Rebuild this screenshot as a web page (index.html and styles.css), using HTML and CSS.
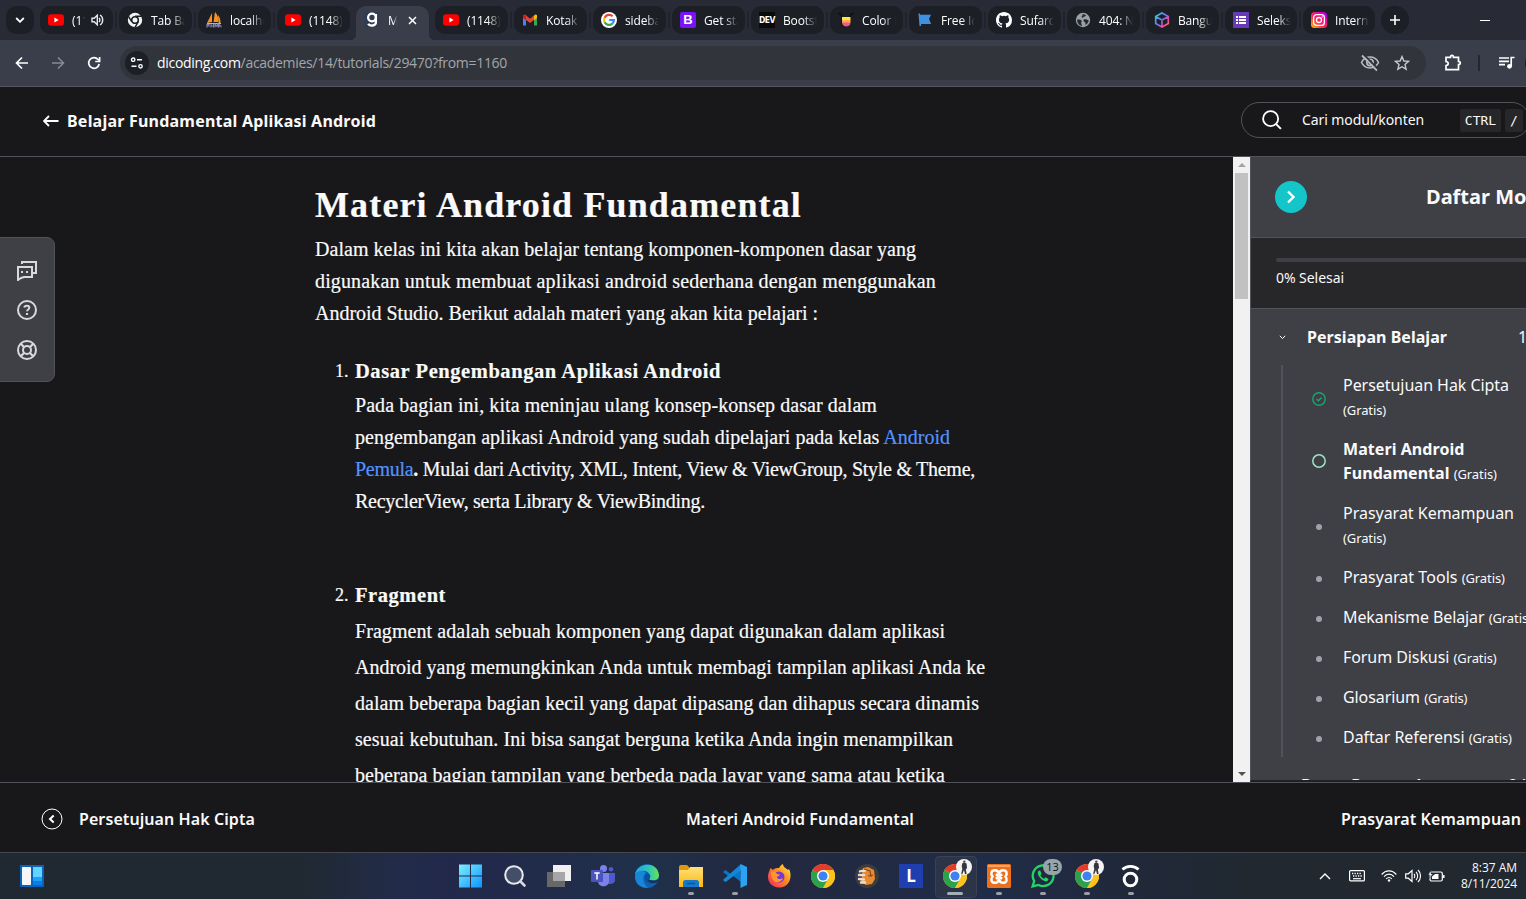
FILE: index.html
```html
<!DOCTYPE html>
<html lang="id">
<head>
<meta charset="utf-8">
<title>Materi Android Fundamental</title>
<link rel="stylesheet" href="styles.css">
</head>
<body>
<svg width="0" height="0" class="defs">
  <defs>
    <linearGradient id="win" x1="0" y1="0" x2="1" y2="1"><stop offset="0" stop-color="#7df0ff"/><stop offset="1" stop-color="#0a94ff"/></linearGradient>
    <linearGradient id="insta" x1="0" y1="1" x2="1" y2="0"><stop offset="0" stop-color="#ffc800"/><stop offset=".4" stop-color="#ff2a50"/><stop offset=".75" stop-color="#e800a8"/><stop offset="1" stop-color="#8a00ff"/></linearGradient>
    <linearGradient id="cube" x1="0" y1="0" x2="1" y2="1"><stop offset="0" stop-color="#22d3d8"/><stop offset=".5" stop-color="#7a6cf0"/><stop offset=".75" stop-color="#f0459a"/><stop offset="1" stop-color="#ff8a30"/></linearGradient>
    <linearGradient id="edge" x1="0" y1="0" x2="1" y2="0"><stop offset="0" stop-color="#1ba6e8"/><stop offset=".6" stop-color="#2fc9b4"/><stop offset="1" stop-color="#6be04c"/></linearGradient>
    <linearGradient id="fire" x1="1" y1="0" x2="0" y2="1"><stop offset="0" stop-color="#fff04a"/><stop offset=".45" stop-color="#ff8a1e"/><stop offset="1" stop-color="#f0206a"/></linearGradient>
    <linearGradient id="folder" x1="0" y1="0" x2="0" y2="1"><stop offset="0" stop-color="#ffe07a"/><stop offset="1" stop-color="#fcb813"/></linearGradient>
    <symbol id="yt" viewBox="0 0 16 16"><rect y="2.3" width="16" height="11.4" rx="3" fill="#f00"/><path d="M6.4 5.6v4.8L10.6 8z" fill="#fff"/></symbol>
    <symbol id="chrome" viewBox="0 0 24 24"><circle cx="12" cy="12" r="12" fill="#fcc31e"/><path d="M12 12L1.6 6A12 12 0 0 1 22.4 6z" fill="#e33b2e"/><path d="M12 12L1.6 6A12 12 0 0 0 12 24l5.2-9z" fill="#2da14c"/><path d="M12 6h10.4A12 12 0 0 1 12 24l5.2-9z" fill="#fcc31e"/><circle cx="12" cy="12" r="6" fill="#fff"/><circle cx="12" cy="12" r="4.6" fill="#3c82f0"/></symbol>
    <symbol id="person" viewBox="0 0 16 16"><circle cx="8" cy="8" r="8" fill="#f4f4f4"/><path d="M6.500 4l2-.5 2 1 .6 5-1.300.3.8 5.200H9L8 11l-1.800 4.200-1-.5L6.300 10l-.6-3z" fill="#35363d"/><circle cx="8.300" cy="2.600" r="1.200" fill="#5d4540"/></symbol>
  </defs>
</svg>

<div class="screen">
  <div class="tabs">
    <div class="tab-btn"><svg width="10" height="6" viewBox="0 0 10 6" class="line"><path d="M1.2 1l3.8 3.8L8.8 1" stroke-width="1.8"/></svg></div>
    <div class="tab"><svg class="fav"><use href="#yt"/></svg><span class="label short">(11</span><svg class="speaker" width="13" height="12" viewBox="0 0 13 12"><path d="M1 4.2h2.2L6.3 1.2v9.6L3.2 7.8H1z" fill="none" stroke="#e6e8eb" stroke-width="1.4"/><path d="M8 4c1.2 1 1.2 3 0 4M9 1c3.6 2 3.6 8 0 10" fill="none" stroke="#e6e8eb" stroke-width="1.4"/></svg></div>
    <div class="tab"><svg class="fav" viewBox="0 0 16 16"><circle cx="8" cy="8" r="7.2" fill="#f3f4f5"/><circle cx="8" cy="8" r="3.3" fill="#f3f4f5" stroke="#1c1f25" stroke-width="1.6"/><path d="M8 4.2h6.6M4.8 9.8L1.5 4.3M11.2 9.8L8 15.4" stroke="#1c1f25" stroke-width="1.4"/></svg><span class="label">Tab Bar</span></div>
    <div class="tab"><svg class="fav" viewBox="0 0 16 16"><path d="M6 1v9L1 11zM9 0c3 3 3.5 6 3 10H7.500zM12 3c2 2 2.500 5 2.500 8h-2z" fill="#f79220"/><path d="M1 11.500h14" stroke="#e8b070"/><path d="M1 15.500v-3h2v1.500H1M5 12v3.500M5 14h2M7.500 12v3.500M9 15.500V12l1.500 2 1.500-2v3.500M13 15.500v-3l2 1.500v1.500" fill="none" stroke="#8888b8" stroke-width="1.1"/></svg><span class="label">localhost</span></div>
    <div class="tab"><svg class="fav"><use href="#yt"/></svg><span class="label">(1148) Y</span></div>
    <div class="tab active"><span class="fav fav-g"><svg width="16" height="16" viewBox="0 0 16 16" fill="none" stroke="#fff" stroke-width="2.300"><circle cx="8" cy="5.500" r="3.900"/><path d="M11.900 2v8.200c0 4-6.500 4.300-7.700 1.600"/></svg></span><span class="label one">Ma</span><svg class="close" width="9" height="9" viewBox="0 0 9 9"><path d="M1 1l7 7M8 1L1 8" stroke="#fff" stroke-width="1.5"/></svg></div>
    <div class="tab nosep"><svg class="fav"><use href="#yt"/></svg><span class="label">(1148) Y</span></div>
    <div class="tab"><svg class="fav" viewBox="0 0 16 16"><path d="M1 3v10.500h3V7.500L1 4z" fill="#4285f4"/><path d="M15 3v10.500h-3V7.500z" fill="#34a853"/><path d="M1 3.500l2-1L8 6.700l5-4.200 2 1v2L8 11 1 5.500z" fill="#ea4335"/><path d="M12 4l1.500-1.500L15 3v3l-3 2.500z" fill="#fbbc04"/><path d="M1 3.500l1-.8 2 1.500v4L1 6z" fill="#c5221f"/></svg><span class="label">Kotak M</span></div>
    <div class="tab"><svg class="fav" viewBox="0 0 16 16"><circle cx="8" cy="8" r="8" fill="#fff"/><g fill="none" stroke-width="2.200"><path d="M11.600 4.300A5 5 0 0 0 3.600 5.700" stroke="#ea4335"/><path d="M3.600 5.700a5 5 0 0 0 0 4.600" stroke="#fbbc05"/><path d="M3.600 10.300a5 5 0 0 0 7.700 1.400" stroke="#34a853"/><path d="M11.300 11.700A5 5 0 0 0 13 8H8.200" stroke="#4285f4"/></g></svg><span class="label">sidebar</span></div>
    <div class="tab"><span class="fav fav-b">B</span><span class="label">Get start</span></div>
    <div class="tab"><span class="fav fav-dev">DEV</span><span class="label">Bootstr</span></div>
    <div class="tab"><svg class="fav" viewBox="0 0 16 16"><path d="M0 2c2-1 4 0 4 3M16 2c-2-1-4 0-4 3" stroke="#111" stroke-width="1.600" fill="none"/><path d="M3 5h10v6a4 4 0 0 1-4 4H7a4 4 0 0 1-4-4z" fill="#141010"/><path d="M4 5h8.500v3H4z" fill="#ffe83a"/><path d="M4 8h8.500v3H4z" fill="#ffae4d"/><path d="M4 10.500h8.500c0 3-2 4-4.200 4S4 13 4 10.500z" fill="#f0588c"/></svg><span class="label">Color H</span></div>
    <div class="tab"><svg class="fav" viewBox="0 0 16 16"><path d="M1.500 1.500h1.600v1.200h11L12 7l2.200 5H4v2H2.500z" fill="#4090e2"/></svg><span class="label">Free Icon</span></div>
    <div class="tab"><svg class="fav" viewBox="0 0 16 16"><path fill="#fff" d="M8 0C3.580 0 0 3.580 0 8c0 3.540 2.290 6.530 5.470 7.590.4.070.55-.17.55-.38 0-.19-.01-.82-.01-1.490-2.010.37-2.530-.49-2.690-.94-.09-.23-.48-.94-.82-1.130-.28-.15-.68-.52-.01-.53.63-.01 1.080.58 1.230.82.72 1.210 1.870.87 2.330.66.070-.52.28-.87.51-1.070-1.780-.2-3.640-.89-3.640-3.950 0-.87.31-1.590.82-2.150-.08-.2-.36-1.020.08-2.120 0 0 .67-.21 2.200.82a7.400 7.400 0 0 1 4 0c1.530-1.040 2.200-.82 2.200-.82.44 1.100.16 1.920.08 2.120.51.56.82 1.270.82 2.150 0 3.070-1.870 3.750-3.650 3.950.29.25.54.73.54 1.480 0 1.070-.01 1.930-.01 2.200 0 .21.15.46.55.38A8 8 0 0 0 16 8c0-4.420-3.580-8-8-8z"/></svg><span class="label">Sufardi</span></div>
    <div class="tab"><svg class="fav" viewBox="0 0 16 16"><circle cx="8" cy="8" r="7.200" fill="#9aa0a6"/><path d="M2.200 7.500c2.500 0 4 .5 4.500 1.300.5.800-1 1.200-.5 2.500l1 2.700c-3-.3-5.300-3.300-5-6.500zM7.500 2.200c1.500-.2 3 .5 3.700 1.300-1 .3-1.500 1.500-2.700 1.500-.5 1-1.800.8-2 .2 0-1 1.700-1.500 1-3zM8.700 7.600c1.500-.6 3.800 0 5.100 1.200-.6 2-1.800 3.300-3.300 4.200-.2-1.500.3-2.500-.8-3-1 0-1.500-1.500-1-2.400z" fill="#24272e"/></svg><span class="label">404: No</span></div>
    <div class="tab"><svg class="fav" viewBox="0 0 16 16"><path d="M8 .9l6.300 3.500v7L8 15.100l-6.300-3.700v-7zM2 4.700L8 8l6-3.300M8 8v7" fill="none" stroke="url(#cube)" stroke-width="1.700"/></svg><span class="label">Bangun</span></div>
    <div class="tab narrow"><svg class="fav" viewBox="0 0 16 16"><rect width="16" height="16" fill="#673ab7"/><path d="M3 4h2v2H3zM3 7h2v2H3zM3 10h2v2H3zM6 4h7v2H6zM6 7h7v2H6zM6 10h7v2H6z" fill="#fff"/></svg><span class="label">Seleksi</span></div>
    <div class="tab narrow"><svg class="fav" viewBox="0 0 16 16"><rect width="16" height="16" rx="3.500" fill="url(#insta)"/><rect x="2.600" y="2.600" width="10.800" height="10.800" rx="3" fill="none" stroke="#fff" stroke-width="1.300"/><circle cx="8" cy="8" r="2.500" fill="none" stroke="#fff" stroke-width="1.300"/><circle cx="11.200" cy="4.900" r=".7" fill="#fff"/></svg><span class="label">Interns</span></div>
    <div class="tab-btn"><svg width="10" height="10" viewBox="0 0 10 10"><path d="M5 0v10M0 5h10" stroke="#fff" stroke-width="1.600"/></svg></div>
    <div class="minimize"></div>
  </div>

  <div class="toolbar">
    <div class="nav">
      <svg width="14" height="14" viewBox="0 0 14 14" class="line"><path d="M13 7H2M7 1.500L1.500 7 7 12.500" stroke-width="1.700"/></svg>
      <svg width="14" height="14" viewBox="0 0 14 14" class="line dim"><path d="M1 7h11M7 1.500L12.500 7 7 12.500" stroke-width="1.500"/></svg>
      <svg width="14" height="14" viewBox="0 0 14 14" class="line"><path d="M12.200 8A5.300 5.300 0 1 1 11 3.500l1 1" stroke-width="1.700"/><path d="M12.600 1v4.500H8.200" stroke-width="1.700"/></svg>
    </div>
    <div class="omnibox">
      <span class="siteinfo"><svg width="14" height="12" viewBox="0 0 14 12" class="line"><circle cx="3.200" cy="2.700" r="1.700" stroke-width="1.400"/><path d="M7 2.700h5M1.500 9.300h5" stroke-width="1.500"/><circle cx="10.500" cy="9.300" r="1.700" stroke-width="1.400"/></svg></span>
      <span class="url" data-fit="350"><b>dicoding.com</b>/academies/14/tutorials/29470?from=1160</span>
      <svg class="eye" width="20" height="18" viewBox="0 0 20 18"><path d="M1.500 8.500C3.500 4.500 6.600 3 10 3s6.500 1.500 8.500 5.500C16.500 12.500 13.400 14 10 14s-6.500-1.500-8.500-5.500z" fill="none" stroke="#b9bcc0" stroke-width="1.600"/><circle cx="10" cy="8.500" r="3.200" fill="none" stroke="#b9bcc0" stroke-width="1.600"/><path d="M4 .8L19 16" stroke="#31343b" stroke-width="1.800"/><path d="M2 1.500L17 16.700" stroke="#b9bcc0" stroke-width="1.800"/></svg>
      <svg class="star" width="16" height="16" viewBox="0 0 16 16"><path d="M8 1.600l1.900 4.400 4.700.4-3.600 3.100 1.100 4.700L8 11.700l-4.100 2.500L5 9.500 1.400 6.400 6.100 6z" fill="none" stroke="#c6c8cb" stroke-width="1.400"/></svg>
    </div>
    <svg class="puzzle" width="18" height="18" viewBox="0 0 18 18"><path d="M2 3.300h4.500C6.500.8 9.500.8 9.500 3.300H14.500v4.200c2.400 0 2.400 3 0 3v5.200H2v-4c3-.6 3-3.800 0-4.200z" fill="none" stroke="#fff" stroke-width="1.700"/></svg>
    <span class="tsep"></span>
    <svg class="music" width="16" height="14" viewBox="0 0 16 14"><path d="M0 2h10M0 5.300h10M0 8.600h6M12.200 10V1.500h3.300" stroke="#fff" stroke-width="1.700" fill="none"/><circle cx="10.500" cy="10.300" r="2.400" fill="#fff"/></svg>
    <span class="avatar-edge"></span>
  </div>

  <header class="head">
    <svg width="16" height="12" viewBox="0 0 16 12" class="line"><path d="M15.500 6H1.500M6 1L1 6l5 5" stroke-width="1.800"/></svg>
    <strong class="course" data-fit="309">Belajar Fundamental Aplikasi Android</strong>
    <div class="search">
      <svg width="20" height="20" viewBox="0 0 22 22" class="line"><circle cx="9.500" cy="9.500" r="8.300" stroke-width="2"/><path d="M15.300 15.300l5.500 5.500" stroke-width="2.200"/></svg>
      <span class="hint" data-fit="122">Cari modul/konten</span>
      <kbd class="key">CTRL</kbd><kbd class="key slash">/</kbd>
    </div>
  </header>

  <main class="main">
    <aside class="rail">
      <svg width="20" height="20" viewBox="0 0 20 20"><path d="M5 3V1h14v11h-3M1 6h14v10H7l-3 1-3 2z" fill="none" stroke="#d9d9dc" stroke-width="2"/><path d="M4 10h2v2H4zM9 10h2v2H9z" fill="#d9d9dc"/></svg>
      <svg width="20" height="20" viewBox="0 0 20 20"><circle cx="10" cy="10" r="9" fill="none" stroke="#d9d9dc" stroke-width="2"/><path d="M7.300 7.500C7.700 5 12.400 5.200 12.300 7.800c0 1.800-2.300 1.600-2.300 3.500" fill="none" stroke="#d9d9dc" stroke-width="2"/><path d="M9 13h2v2H9z" fill="#d9d9dc"/></svg>
      <svg width="20" height="20" viewBox="0 0 20 20" fill="none" stroke="#d9d9dc" stroke-width="2"><circle cx="10" cy="10" r="9"/><circle cx="10" cy="10" r="4"/><path d="M3.800 3.800l3.400 3.400M16.200 3.800l-3.400 3.400M3.800 16.200l3.400-3.400M16.200 16.200l-3.400-3.400" stroke-width="2.200"/></svg>
    </aside>
    <article class="article">
      <h1><span data-fit="487">Materi Android Fundamental</span></h1>
      <p><span data-fit="601">Dalam kelas ini kita akan belajar tentang komponen-komponen dasar yang</span><br><span data-fit="621">digunakan untuk membuat aplikasi android sederhana dengan menggunakan</span><br><span data-fit="503">Android Studio. Berikut adalah materi yang akan kita pelajari :</span></p>
      <div class="item first"><span class="num">1.</span><div>
        <h2><span data-fit="366">Dasar Pengembangan Aplikasi Android</span></h2>
        <p><span data-fit="522">Pada bagian ini, kita meninjau ulang konsep-konsep dasar dalam</span><br><span data-fit="595">pengembangan aplikasi Android yang sudah dipelajari pada kelas <a>Android</a></span><br><span data-fit="620"><a>Pemula</a><b>.</b> Mulai dari Activity, XML, Intent, View &amp; ViewGroup, Style &amp; Theme,</span><br><span data-fit="350">RecyclerView, serta Library &amp; ViewBinding.</span></p>
      </div></div>
      <div class="item second"><span class="num">2.</span><div>
        <h2><span data-fit="91">Fragment</span></h2>
        <p><span data-fit="590">Fragment adalah sebuah komponen yang dapat digunakan dalam aplikasi</span><br><span data-fit="630">Android yang memungkinkan Anda untuk membagi tampilan aplikasi Anda ke</span><br><span data-fit="624">dalam beberapa bagian kecil yang dapat dipasang dan dihapus secara dinamis</span><br><span data-fit="598">sesuai kebutuhan. Ini bisa sangat berguna ketika Anda ingin menampilkan</span><br><span data-fit="590">beberapa bagian tampilan yang berbeda pada layar yang sama atau ketika</span></p>
      </div></div>
    </article>
    <div class="scrollbar"><i class="up"></i><i class="thumb"></i><i class="down"></i></div>
    <nav class="modules">
      <div class="mod-head"><span class="toggle"><svg width="10" height="14" viewBox="0 0 10 14" class="line"><path d="M2 1.500L7.500 7 2 12.500" stroke-width="2.400"/></svg></span><strong>Daftar Modul</strong></div>
      <div class="progress"><div class="bar"></div><span data-fit="68">0% Selesai</span></div>
      <div class="list">
        <div class="group"><svg width="7" height="5" viewBox="0 0 7 5" class="line"><path d="M.8.8l2.700 2.700L6.200.8" stroke-width="1" /></svg><strong data-fit="140">Persiapan Belajar</strong><span class="count">1/8</span></div>
        <ul class="lessons">
          <li><svg class="state" width="14" height="14" viewBox="0 0 14 14" fill="none" stroke="#17a673" stroke-width="1.400"><circle cx="7" cy="7" r="6.200"/><path d="M4.400 7l1.900 1.800 3.300-3.300"/></svg><span><span data-fit="166">Persetujuan Hak Cipta</span><br><small>(Gratis)</small></span></li>
          <li class="current"><svg class="state" width="14" height="14" viewBox="0 0 14 14" fill="none" stroke="#9fe3c5" stroke-width="1.500"><circle cx="7" cy="7" r="6.200"/></svg><span><b data-fit="121.500">Materi Android</b><br><b data-fit="106.500">Fundamental</b> <small>(Gratis)</small></span></li>
          <li><i class="dot"></i><span><span data-fit="171">Prasyarat Kemampuan</span><br><small>(Gratis)</small></span></li>
          <li><i class="dot"></i><span><span data-fit="114.500">Prasyarat Tools</span> <small>(Gratis)</small></span></li>
          <li><i class="dot"></i><span><span data-fit="141.500">Mekanisme Belajar</span> <small>(Gratis)</small></span></li>
          <li><i class="dot"></i><span><span data-fit="106.300">Forum Diskusi</span> <small>(Gratis)</small></span></li>
          <li><i class="dot"></i><span><span data-fit="77">Glosarium</span> <small>(Gratis)</small></span></li>
          <li><i class="dot"></i><span><span data-fit="121.500">Daftar Referensi</span> <small>(Gratis)</small></span></li>
        </ul>
        <div class="group next"><strong>Dasar Pengembangan</strong><span class="count">24</span></div>
      </div>
    </nav>
  </main>

  <footer class="foot">
    <div class="prev"><svg width="22" height="22" viewBox="0 0 22 22" class="line"><circle cx="11" cy="11" r="10" stroke-width="1"/><path d="M12.700 7.500L9 11l3.700 3.500" stroke-width="2"/></svg><span data-fit="176">Persetujuan Hak Cipta</span></div>
    <div class="here" data-fit="228">Materi Android Fundamental</div>
    <div class="nextup"><span data-fit="180">Prasyarat Kemampuan</span></div>
  </footer>

  <div class="taskbar">
    <svg class="widgets" width="24" height="22" viewBox="0 0 24 22"><rect width="24" height="22" rx="1" fill="#0a64bc"/><rect x="2" y="2" width="9" height="18" rx=".8" fill="#f7f7f7"/><path d="M13 2h9v10h-9z" fill="#63d4ff"/><path d="M13 12h9v4h-9z" fill="#1ea2f6"/><path d="M13 16h9v4h-9z" fill="#087ee6"/></svg>
    <div class="apps">
      <div class="app"><svg viewBox="0 0 24 24"><path d="M0 .500h11v11H0zM12 .500h11v11H12zM0 12.500h11v11H0zM12 12.500h11v11H12z" fill="url(#win)"/></svg></div>
      <div class="app"><svg viewBox="0 0 24 24"><circle cx="11" cy="11" r="8.800" fill="#434e68" stroke="#e8eaec" stroke-width="2"/><path d="M17.500 17.500l4 4" stroke="#d5d8dc" stroke-width="2.600" stroke-linecap="round"/></svg></div>
      <div class="app"><svg viewBox="0 0 24 24"><rect y="8" width="18" height="15" fill="#686868"/><rect x="6" y="1" width="18" height="16" fill="#f0f0f2"/><path d="M6 8h12v9H6z" fill="#a6a6a8"/></svg></div>
      <div class="app"><svg viewBox="0 0 24 24"><circle cx="12.500" cy="4.500" r="3.500" fill="#7b83eb"/><circle cx="20" cy="5.200" r="2.300" fill="#5059c9"/><path d="M16 9h8v7c0 3-3 4-5 4h-3z" fill="#5059c9"/><path d="M7 9h11v8c0 7-11 7-11 0z" fill="#7b83eb"/><rect y="6" width="12" height="12" rx="1" fill="#4b53bc"/><path d="M3.300 9h5.400M6 9v6.500" stroke="#fff" stroke-width="1.500"/></svg></div>
      <div class="app"><svg viewBox="0 0 24 24"><circle cx="12" cy="12" r="12" fill="#0b62b8"/><path d="M0 11C1-1 22-4 24 11c0 5-5 6-9 5-2-1 1-2 0-5C13 6 4 5 0 11z" fill="url(#edge)"/><path d="M0 12c2-6 9-6 11-3-4 2-4 10 2 14.800C5 24.500 0 19 0 12z" fill="#1a86d8"/><path d="M11 9.500c-3 4 0 10 5 10 3 0 5-1 6-2-1-1-3 0-7-1.500-2-1 1-2 0-5z" fill="#0c4f9c"/><path d="M15 16c2 1.300 5.500 1 8-.7l1 4.700-1.500-2c-3 2-8 1.500-9.500-2z" fill="#20304a"/></svg></div>
      <div class="app run"><svg viewBox="0 0 24 24"><path d="M0 3a2 2 0 0 1 2-2h6l2 2v4H0z" fill="#e09a07"/><path d="M0 6h9l2-3h13v20H0z" fill="url(#folder)"/><path d="M4 23v-4.500A2.500 2.500 0 0 1 6.500 16h11a2.500 2.500 0 0 1 2.500 2.500V23z" fill="#1578c8"/><path d="M8 19.500h8" stroke="#0c5594" stroke-width="1.500"/></svg></div>
      <div class="app run"><svg viewBox="0 0 24 24"><path d="M17 6L2.500 18 0 16l5-4-5-4 2.500-2L18 18z" fill="#0b74c4"/><path d="M0 16l2.500 2L18 6.500V0z" fill="#1287d6"/><path d="M17.500 0L24 3v18l-6.500 3z" fill="#2aa3f4"/></svg></div>
      <div class="app"><svg viewBox="0 0 24 24"><path d="M2 8l1.500-4L6 6c2-2 4-2 6-2 1-2 2-3 4-4 0 3 3 4 5 6l1-1c2 4 2 8 .5 12C20 22 16 23.500 12 23.500 3 23.500-1 15 2 8z" fill="url(#fire)"/><circle cx="12" cy="13" r="5.500" fill="#7436d8"/><path d="M4 8c3-1 5 0 6 2l3 .500c-1 2-3 1.500-3 3 1 2 4 2 6 .5-1 5-9 6-11 0-1-2-1-4-1-6z" fill="#ff962a"/></svg></div>
      <div class="app"><svg><use href="#chrome"/></svg></div>
      <div class="app"><svg viewBox="0 0 24 24"><circle cx="12" cy="12" r="12" fill="#3b3c3c"/><path d="M8 4l5-1 6 3 1 9-3 5-6 1-5-3 1-7z" fill="#e88a32"/><path d="M5 7.500l5-1M4 11l5 0M4 15l5 .5M6 18.500l4 0" stroke="#f2dfc9" stroke-width="2.400" stroke-linecap="round"/><path d="M9 5l6 2 1 6M13 12l5-1" stroke="#8c4715" stroke-width="1.200" fill="none"/><circle cx="4" cy="13" r="1.200" fill="#4058b8"/><circle cx="6" cy="9" r="1" fill="#4058b8"/></svg></div>
      <div class="app"><span class="l-tile">L</span></div>
      <div class="app run current"><svg><use href="#chrome"/></svg><svg class="who"><use href="#person"/></svg></div>
      <div class="app run"><svg viewBox="0 0 24 24"><rect width="24" height="24" rx="1.500" fill="#ed711d"/><path d="M1 1h22v2H1z" fill="#f7a367"/><path d="M5.500 12.500C3.500 10 4 6.200 8 6.200s3 3.300 4 3.300 0-3.300 4-3.300 4.500 3.800 2.500 6.300c2 2.500 1.500 6.300-2.500 6.300s-3-3.300-4-3.300 0 3.300-4 3.300-4.500-3.800-2.500-6.300zM8.800 10.300l6.400 4.400M15.200 10.300l-6.400 4.400" fill="none" stroke="#fff" stroke-width="2.500"/></svg></div>
      <div class="app run"><svg viewBox="0 0 24 24"><path d="M1.600 22.400L3.200 17A10.400 10.400 0 1 1 7.500 21z" fill="none" stroke="#25d366" stroke-width="2.300"/><path d="M8 6.500c-3 2 0 7 3.500 9.500 3 2 5.500 2 6-1l-3-1.800-1.500 1.500c-2-.8-3-2-3.700-3.500L10.500 10 9.300 6.700z" fill="#25d366"/></svg><span class="badge">13</span></div>
      <div class="app run"><svg><use href="#chrome"/></svg><svg class="who"><use href="#person"/></svg></div>
      <div class="app run"><svg viewBox="0 0 24 24" fill="none" stroke="#fff"><circle cx="11.500" cy="15.500" r="6.300" stroke-width="3"/><path d="M3.500 5.500c4-4.300 12-4.300 16 0" stroke-width="2.800"/></svg></div>
    </div>
    <div class="tray">
      <svg width="12" height="7" viewBox="0 0 12 7" class="line"><path d="M1 6l5-5 5 5" stroke-width="1.400"/></svg>
      <svg width="16" height="12" viewBox="0 0 16 12" class="line"><rect x=".6" y=".6" width="14.800" height="10.300" rx="1" stroke-width="1.200"/><path d="M3 3.500h10M4 6h9" stroke-width="1.300" stroke-dasharray="1.300 1.200"/><path d="M4 8.700h8" stroke-width="1.200"/></svg>
      <svg width="16" height="12" viewBox="0 0 16 12" class="line"><path d="M.7 4.500c4-4.800 10.600-4.800 14.600 0M3 6.700c3-3.400 7-3.400 10 0M5.200 8.900c1.700-1.900 3.900-1.900 5.600 0" stroke-width="1.200"/><circle cx="8" cy="10.500" r="1.200" fill="#fff" stroke="none"/></svg>
      <svg width="16" height="14" viewBox="0 0 16 14" class="line"><path d="M.7 4.800h2.600L7 1.500v11L3.300 9.200H.700z" stroke-width="1.200"/><path d="M9 5c1 1 1 3 0 4M11 3c2.200 2 2.200 6 0 8M13 1c3.300 3 3.300 9 0 12" stroke-width="1.100"/></svg>
      <svg width="17" height="12" viewBox="0 0 17 12" class="line"><rect x="2" y="2" width="12.300" height="9" rx="1.500" stroke-width="1.200"/><path d="M15.800 5v3" stroke-width="1.500"/><path d="M7 4h3.500v5H4V6.500z" fill="#fff" stroke="none"/><path d="M3.500 0L0 5h2.200L1.200 8.500 5 4H3z" fill="#fff" stroke="#212830" stroke-width=".5"/></svg>
      <div class="clock"><span data-fit="45">8:37 AM</span><br><span data-fit="56">8/11/2024</span></div>
    </div>
  </div>
</div>
<script src="fit.js"></script>
</body>
</html>
```
FILE: fit.js
```js
// Tracks each labelled run so it spans its set measure in pixels.
document.querySelectorAll('[data-fit]').forEach(function (el) {
  var range = document.createRange();
  range.selectNodeContents(el);
  var width = range.getBoundingClientRect().width;
  var gap = (Number(el.dataset.fit) - width) / el.textContent.length;
  el.style.letterSpacing = gap.toFixed(3) + 'px';
});
```
FILE: styles.css
```css
* { box-sizing: border-box; }
body { margin: 0; background: #18181a; color: #fafafa; font-family: "Noto Sans", "Open Sans", sans-serif; overflow: hidden; }
.defs { position: absolute; }
.screen { width: 1526px; height: 899px; display: flex; flex-direction: column; overflow: hidden; }
.line { fill: none; stroke: #fff; flex: none; }
.dim { stroke: #888b94; }

.tabs { height: 40px; background: #282b35; display: flex; gap: 6px; padding: 6px 0 0 6px; flex: none; }
.tab-btn { width: 28px; height: 28px; border-radius: 14px; background: #1c1f25; display: flex; align-items: center; justify-content: center; flex: none; }
.tab-btn:first-child { border-radius: 10px; }
.tab { position: relative; width: 73px; height: 28px; border-radius: 10px; background: #1c1f25; display: flex; align-items: center; padding-left: 8px; flex: none; }
.tab.narrow { width: 72px; }
.tab + .tab::before { content: ""; position: absolute; left: -4px; top: 6px; width: 2px; height: 16px; background: #20232c; }
.tab.active { background: #3a3e4b; height: 34px; border-radius: 10px 10px 0 0; padding-bottom: 6px; }
.tab.active::before { display: none; }
.tab.nosep::before { display: none; }
.tab.active::after { content: ""; position: absolute; left: -6px; right: -6px; bottom: 0; height: 6px; background: radial-gradient(circle at 0 0, transparent 6px, #3a3e4b 6.500px) left / 6px 6px no-repeat, radial-gradient(circle at 100% 0, transparent 6px, #3a3e4b 6.500px) right / 6px 6px no-repeat; }
.fav { width: 16px; height: 16px; flex: none; }
.label { width: 34px; margin-left: 8px; padding-top: 1px; overflow: hidden; white-space: nowrap; font: 12px/17px "Open Sans", sans-serif; letter-spacing: -.15px; color: #fff; -webkit-mask-image: linear-gradient(90deg, #000 60%, transparent 100%); }
.label.short { width: 13px; }
.label.one { width: 9px; }
.speaker { margin-left: 6px; flex: none; }
.close { margin-left: 11px; }
.fav-g { background: #303c54; }
.fav-g svg { display: block; }
.fav-b { background: #7b13f7; color: #fff; border-radius: 2px; font: bold 13px/16px "Liberation Sans", sans-serif; text-align: center; }
.fav-dev { background: #0a0a0a; color: #fff; font: bold 8.500px/16px "DejaVu Sans Condensed", "Liberation Sans", sans-serif; letter-spacing: -.5px; text-align: center; }
.minimize { width: 10px; height: 1px; background: #fff; margin: 14px 0 0 65px; }

.toolbar { height: 47px; background: #3a3e4b; border-bottom: 1px solid #55565f; display: flex; align-items: center; flex: none; overflow: hidden; }
.nav { display: flex; gap: 22px; width: 120px; padding-left: 15px; flex: none; }
.omnibox { width: 1306px; height: 34px; border-radius: 17px; background: #31343b; display: flex; align-items: center; padding-left: 5px; flex: none; }
.siteinfo { width: 24px; height: 24px; border-radius: 50%; background: #1c1f27; display: flex; align-items: center; justify-content: center; }
.url { margin: -1px 0 0 8px; font-family: "Open Sans", sans-serif; font-size: 14px; color: #a3a6ab; white-space: nowrap; }
.url b { font-weight: 400; color: #fff; }
.eye { margin-left: auto; }
.star { margin: 0 16px 0 14px; }
.puzzle { margin-left: 18px; flex: none; }
.tsep { width: 2px; height: 16px; background: #23262e; margin-left: 16px; flex: none; }
.music { margin-left: 19px; flex: none; }
.avatar-edge { width: 26px; height: 26px; border-radius: 50%; background: #1c1f25; margin-left: 10px; flex: none; }

.head { height: 70px; border-bottom: 1px solid #52525b; display: flex; align-items: center; padding: 0 0 2px 43px; flex: none; }
.course { margin-left: 8px; font-size: 16px; white-space: nowrap; }
.search { width: 289px; height: 36px; margin: -1px -4px 0 auto; border: 1px solid #52525b; border-radius: 18px; display: flex; align-items: center; padding-left: 20px; flex: none; }
.hint { width: 158px; margin: -2px 0 0 20px; font-size: 14px; white-space: nowrap; }
.key { height: 23px; width: 41px; border-radius: 2px; background: #27272a; font: 13px/24px "DejaVu Sans Mono", monospace; text-align: center; }
.slash { width: 18px; margin-left: 4px; }

.main { position: relative; height: 625px; display: flex; flex: none; overflow: hidden; }
.rail { position: absolute; left: -1px; top: 80px; width: 56px; height: 145px; border: 1px solid #52525b; border-radius: 0 8px 8px 0; background: #3f3f46; display: flex; flex-direction: column; gap: 20px; padding: 23px 0 0 17px; }
.rail svg { flex: none; }
.rail svg + svg { margin-top: -1px; }
.rail svg:last-child { margin-top: 0; }
.article { width: 1233px; flex: none; padding: 28px 0 0 315px; font-family: "Liberation Serif", serif; font-size: 20px; -webkit-text-stroke: .2px; white-space: nowrap; overflow: hidden; }
.article h1 { margin: 0 0 8px; font-size: 36px; line-height: 40px; }
.article h2 { margin: 0 0 2px; font-size: 20.500px; line-height: 32px; }
.article p { margin: 0; line-height: 32px; }
.article a { color: #5393ff; }
.item { display: grid; grid-template-columns: 20px auto; margin-left: 20px; }
.num { line-height: 33px; font-size: 18px; }
.first { margin-top: 26px; }
.second { margin-top: 62px; }
.second p { line-height: 36px; }

.scrollbar { width: 17px; background: #f1f1f1; display: flex; flex-direction: column; align-items: center; flex: none; }
.up { border: 4px solid transparent; border-top: 0; border-bottom: 4px solid #a3a3a3; margin: 6px 0; }
.thumb { width: 13px; height: 126px; background: #c1c1c1; }
.down { border: 4px solid transparent; border-bottom: 0; border-top: 4px solid #505050; margin: auto 0 6px; }

.modules { width: 276px; border-left: 1px solid #52525b; border-bottom: 2px solid #202023; background: #3f3f46; flex: none; overflow: hidden; white-space: nowrap; }
.mod-head { height: 81px; border-bottom: 1px solid #52525b; display: flex; align-items: center; padding-left: 24px; font-size: 20px; }
.mod-head strong { margin: -2px 0 0 119px; }
.toggle { width: 32px; height: 32px; border-radius: 50%; background: #14c5c9; display: flex; align-items: center; justify-content: center; flex: none; }
.progress { height: 71px; border-bottom: 1px solid #52525b; background: #27272a; padding: 20px 0 0 25px; font-size: 14px; line-height: 20px; }
.bar { height: 4px; border-radius: 2px 0 0 2px; background: #3f3f46; margin-bottom: 6px; }
.group { height: 56px; display: flex; align-items: center; padding-left: 28px; }
.group strong { margin-left: 21px; }
.group .count { margin-left: 71px; }
.lessons { list-style: none; margin: 0 0 0 30px; padding: 8px 0; border-left: 2px solid #52525b; display: flex; flex-direction: column; gap: 16px; line-height: 24px; font-size: 16px; }
.lessons li { display: flex; align-items: center; padding-left: 29px; }
.lessons small { font-size: 13px; line-height: 16px; letter-spacing: -.1px; }
.state { flex: none; margin: 4px 17px 0 0; }
.current .state { margin-top: 0; }
.dot { width: 6px; height: 6px; border-radius: 50%; background: #a1a1aa; margin: 4px 21px 0 4px; flex: none; }
.group.next { height: 55px; }
.next strong { margin-left: 22px; }
.group.next .count { margin-left: 32px; }

.foot { height: 71px; border-top: 1px solid #52525b; border-bottom: 1px solid #45474e; display: grid; grid-template-columns: 686px 1fr auto; align-items: center; padding: 2px 5px 0 0; font-size: 16px; font-weight: 600; white-space: nowrap; flex: none; }
.prev { display: flex; align-items: center; padding-left: 41px; gap: 16px; }

.taskbar { height: 46px; display: flex; background: linear-gradient(90deg, #202831 0, #202831 300px, #222c4a 400px, #22284a 450px, #20304a 650px, #22283e 760px, #202c48 980px, #20283a 1130px, #212830 1250px); flex: none; }
.widgets { margin: 12px 0 0 20px; flex: none; }
.apps { display: flex; margin-left: 404px; }
.app { position: relative; width: 44px; height: 46px; padding: 11px 9px 0 11px; flex: none; }
.app > svg { position: relative; width: 24px; height: 24px; display: block; }
.run::after { content: ""; position: absolute; left: 20px; bottom: 4px; width: 6px; height: 3px; border-radius: 2px; background: #9a9fa9; }
.app.current::before { content: ""; position: absolute; left: 3px; top: 3px; width: 40px; height: 40px; border-radius: 4px; background: #2c3448; border: 1px solid #394154; }
.app.current::after { left: 15px; width: 16px; background: #a3b0b8; }
.app > .who { position: absolute; right: 4px; top: 6px; width: 16px; height: 16px; }
.badge { position: absolute; left: 23px; top: 6px; width: 19px; height: 16px; border-radius: 8px; background: #97a5a9; color: #111; font: 11px/16px "Open Sans", sans-serif; text-align: center; }
.l-tile { display: block; width: 24px; height: 24px; background: #1f3fb0; color: #fff; font: bold 17px/24px "Open Sans", sans-serif; text-align: center; }
.tray { display: flex; align-items: center; margin-left: auto; padding-right: 9px; }
.tray svg:nth-child(2) { margin-left: 18px; }
.tray svg:nth-child(3) { margin-left: 16px; }
.tray svg:nth-child(4) { margin-left: 8px; }
.tray svg:nth-child(5) { margin-left: 7px; }
.clock { width: 64px; margin-left: 8px; text-align: right; font: 12px/16px "Open Sans", sans-serif; white-space: nowrap; }
```
